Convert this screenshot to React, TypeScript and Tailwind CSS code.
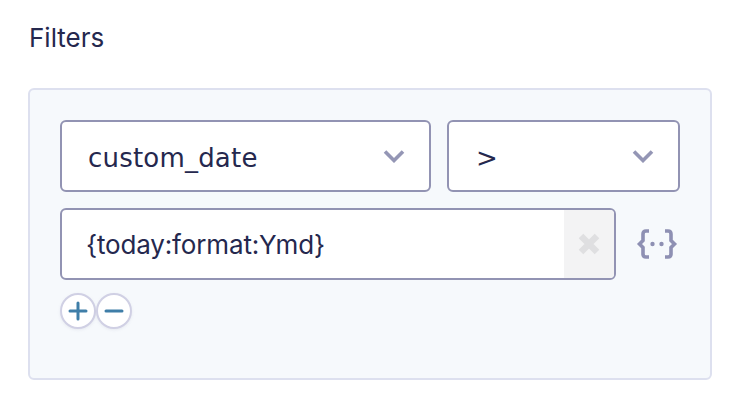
import React from 'react';

const Chevron = () => (
  <svg width="22" height="14" viewBox="0 0 22 14" fill="none" className="shrink-0">
    <path d="M2 2.5 L11 11.5 L20 2.5" stroke="#9496b5" strokeWidth="3.6" />
  </svg>
);

const SelectBox = ({ label, className }: { label: string; className: string }) => (
  <div className={`h-[72px] flex items-center justify-between bg-white border-2 border-[#9293b3] rounded-md pr-[24px] font-['DejaVu_Sans',sans-serif] text-[26px] tracking-[0.2px] ${className}`}>
    <span className="pt-1">{label}</span>
    <Chevron />
  </div>
);

const RoundButton = ({ children, className }: { children: React.ReactNode; className?: string }) => (
  <button className={`w-9 h-9 rounded-full bg-white border-2 border-[#d0d0e4] flex items-center justify-center shadow-[0_1px_3px_rgba(120,120,160,0.12)] ${className ?? ''}`}>
    {children}
  </button>
);

export default function App() {
  return (
    <div className="w-[740px] h-[408px] bg-white px-7 pt-6 text-[#25284e] font-['Inter',sans-serif] text-[26px] overflow-hidden">
      <div className="leading-7 h-[64px] pl-px">Filters</div>
      <div className="w-[684px] h-[292px] bg-[#f6f9fc] border-2 border-[#dde0ef] rounded-md pl-[30px] pt-[30px]">
        <div className="flex gap-4">
          <SelectBox label="custom_date" className="w-[371px] pl-[26px]" />
          <SelectBox label=">" className="w-[233px] pl-[27px]" />
        </div>
        <div className="flex items-center mt-4">
          <div className="w-[556px] h-[72px] flex bg-white border-2 border-[#9293b3] rounded-md overflow-hidden">
            <div className="flex-1 flex items-center pl-[24px] tracking-[-0.15px]">{'{today:format:Ymd}'}</div>
            <div className="w-[50px] bg-[#f3f3f4] flex items-center justify-center">
              <svg width="22" height="22" viewBox="0 0 22 22" fill="none">
                <path d="M3 3 L19 19 M19 3 L3 19" stroke="#dfdfe1" strokeWidth="6.5" />
              </svg>
            </div>
          </div>
          <svg width="42" height="32" viewBox="0 0 42 32" fill="none" className="ml-[20px]">
            <path d="M13 3 H10 Q7 3 7 6 V12.5 L3.5 16 L7 19.5 V26 Q7 29 10 29 H13" stroke="#8e90b3" strokeWidth="3.6" />
            <path d="M29 3 H32 Q35 3 35 6 V12.5 L38.5 16 L35 19.5 V26 Q35 29 32 29 H29" stroke="#8e90b3" strokeWidth="3.6" />
            <circle cx="16.5" cy="16" r="2.2" fill="#8e90b3" />
            <circle cx="25.5" cy="16" r="2.2" fill="#8e90b3" />
          </svg>
        </div>
        <div className="flex mt-[13px]">
          <RoundButton>
            <svg width="20" height="20" viewBox="0 0 20 20" fill="none">
              <path d="M2 10 H18 M10 2 V18" stroke="#3f7ea8" strokeWidth="3" strokeLinecap="round" />
            </svg>
          </RoundButton>
          <RoundButton>
            <svg width="20" height="20" viewBox="0 0 20 20" fill="none">
              <path d="M2 10 H18" stroke="#3f7ea8" strokeWidth="3" strokeLinecap="round" />
            </svg>
          </RoundButton>
        </div>
      </div>
    </div>
  );
}
